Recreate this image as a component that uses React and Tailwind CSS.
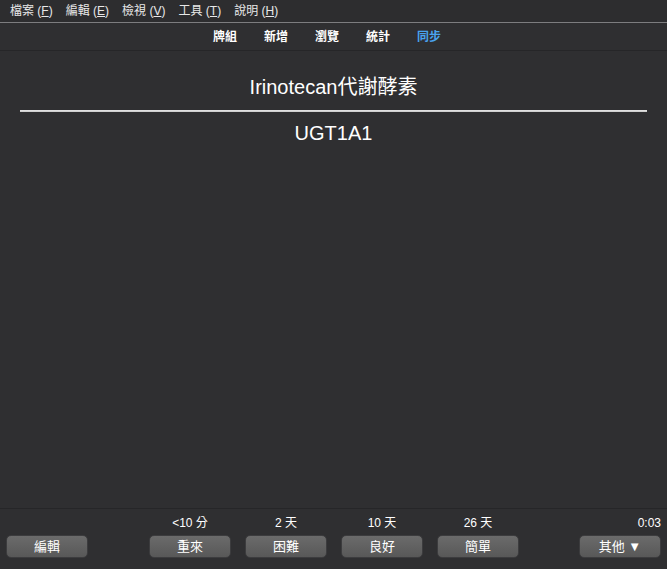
import React from 'react';

const font = { fontFamily: '"Liberation Sans", Arial, "Noto Sans CJK TC", sans-serif' };

const menus = [
  ['檔案', 'F'],
  ['編輯', 'E'],
  ['檢視', 'V'],
  ['工具', 'T'],
  ['說明', 'H'],
];

const links = ['牌組', '新增', '瀏覽', '統計', '同步'];

const answers = [
  { label: '<10 分', text: '重來' },
  { label: '2 天', text: '困難' },
  { label: '10 天', text: '良好' },
  { label: '26 天', text: '簡單' },
];

const Btn = ({ children }) => (
  <button className="h-[23px] w-[82px] rounded-[5px] border border-[#3c3c3e] bg-gradient-to-b from-[#6b6b6b] to-[#585858] text-[13px] text-white leading-none">
    {children}
  </button>
);

const App = () => {
  return (
    <div className="flex h-[569px] w-[667px] flex-col bg-[#2f2f31] text-white" style={font}>
      {/* menu bar */}
      <div className="flex h-[22px] items-center gap-[13px] bg-[#2d2d2f] pl-[10px] text-[12px] text-[#e8e8e8]">
        {menus.map(([name, key]) => (
          <span key={key}>
            {name} (<span className="underline">{key}</span>)
          </span>
        ))}
      </div>
      <div className="h-px bg-[#7d7d7f]" />

      {/* toolbar */}
      <div className="flex h-[28px] items-center justify-center gap-[27px] border-b border-[#262628] pr-[13px] text-[12px] font-bold">
        {links.map((l) => (
          <span key={l} className={l === '同步' ? 'text-[#4aa3ef]' : 'text-white'}>
            {l}
          </span>
        ))}
      </div>

      {/* card */}
      <div className="flex-1 px-[20px] pt-[25px] text-center text-[20px] text-white">
        <div className="leading-[23px]">Irinotecan代謝酵素</div>
        <div className="mt-[11px] h-[2px] border-t border-[#e0e0e0] border-b-[#a0a0a0] bg-[#d0d0d0]" />
        <div className="mt-[10px] leading-[23px]">UGT1A1</div>
      </div>

      {/* bottom bar */}
      <div className="flex h-[61px] border-t border-[#262628] px-[6px] pt-[6px] text-[12px]">
        <div className="flex flex-col">
          <div className="h-[20px]" />
          <Btn>編輯</Btn>
        </div>
        <div className="ml-[61px] flex gap-[14px]">
          {answers.map((a) => (
            <div key={a.text} className="flex flex-col items-center">
              <div className="h-[20px] leading-[16px]">{a.label}</div>
              <Btn>{a.text}</Btn>
            </div>
          ))}
        </div>
        <div className="ml-auto flex flex-col items-end">
          <div className="h-[20px] leading-[16px]">0:03</div>
          <Btn>其他 ▼</Btn>
        </div>
      </div>
    </div>
  );
};

export default App;
